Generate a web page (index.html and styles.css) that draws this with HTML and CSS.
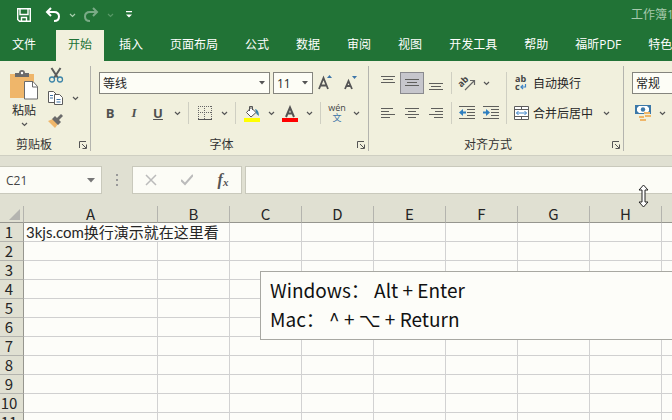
FILE: index.html
```html
<!DOCTYPE html>
<html lang="zh-CN">
<head>
    <meta charset="UTF-8">
    <meta name="viewport" content="width=device-width, initial-scale=1.0">
    <title>工作簿1</title>
    <link rel="stylesheet" href="styles.css">
</head>
<body>
    <header class="title-bar">
        <div class="quick-access">
            <button class="quick-btn" aria-label="保存">
                <svg width="14" height="14" viewBox="0 0 14 14" fill="none" stroke="#fff" stroke-width="1.400"><path d="M.700.700h12.600v12.600H2.500L.700 11.500z"/><path d="M3 1v5.500h8V1M4.500 13V9.500h5V13"/></svg>
            </button>
            <button class="quick-btn" aria-label="撤消">
                <svg width="16" height="16" viewBox="0 0 16 16" fill="none" stroke="#fff" stroke-width="2"><path d="M6 1L2 5l4 4M2.500 5H9q5 0 5 4.500T9 14"/></svg>
            </button>
            <button class="chev-btn" aria-label="撤消选项"><svg class="chev" width="7" height="5" viewBox="0 0 7 5"><path d="M1 1l2.500 2.500L6 1"/></svg></button>
            <button class="quick-btn faded" aria-label="恢复">
                <svg width="16" height="16" viewBox="0 0 16 16" fill="none" stroke="#fff" stroke-width="2"><path d="M10 1l4 4-4 4M13.500 5H7q-5 0-5 4.500T7 14"/></svg>
            </button>
            <button class="chev-btn faded" aria-label="恢复选项"><svg class="chev" width="7" height="5" viewBox="0 0 7 5"><path d="M1 1l2.500 2.500L6 1"/></svg></button>
            <button class="quick-btn customize" aria-label="自定义快速访问工具栏">
                <svg width="8" height="8" viewBox="0 0 8 8" fill="#fff"><path d="M1 0h6v1.300H1zM1 3.500h6L4 6.500z"/></svg>
            </button>
        </div>
        <span class="doc-name">工作簿1</span>
    </header>

    <nav class="tabs">
        <a href="#file" class="tab file">文件</a>
        <a href="#home" class="tab active">开始</a>
        <a href="#insert" class="tab">插入</a>
        <a href="#layout" class="tab">页面布局</a>
        <a href="#formulas" class="tab">公式</a>
        <a href="#data" class="tab">数据</a>
        <a href="#review" class="tab">审阅</a>
        <a href="#view" class="tab">视图</a>
        <a href="#developer" class="tab">开发工具</a>
        <a href="#help" class="tab">帮助</a>
        <a href="#pdf" class="tab">福昕PDF</a>
        <a href="#special" class="tab">特色</a>
    </nav>

    <div class="ribbon">
        <section class="group clipboard">
            <div class="clip-tools">
                <button class="paste">
                    <svg width="28" height="30" viewBox="0 0 28 30"><path d="M0 4h24v24H0z" fill="#efb66a"/><path d="M5 7V3h4q0-3 3-3t3 3h4v4z" fill="#6b6b6b"/><circle cx="12" cy="3" r="1.200" fill="#fff"/><path d="M14.500 11.500H23l4.500 5v12.500h-13z" fill="#fff" stroke="#6b6b6b"/><path d="M22.500 11.500v5.500h5" fill="none" stroke="#6b6b6b"/></svg>
                    <span>粘贴</span>
                    <svg class="chev" width="7" height="5" viewBox="0 0 7 5"><path d="M1 1l2.500 2.500L6 1"/></svg>
                </button>
                <div class="clip-side">
                    <button class="icon-btn" aria-label="剪切">
                        <svg width="16" height="16" viewBox="0 0 16 16" fill="none"><path d="M3.500 1L10 11M12.500 1L6 11" stroke="#5c5c5c" stroke-width="2"/><circle cx="4" cy="12.500" r="2.500" stroke="#3c84a8" stroke-width="1.300"/><circle cx="12" cy="12.500" r="2.500" stroke="#3c84a8" stroke-width="1.300"/></svg>
                    </button>
                    <div class="row-pair">
                        <button class="icon-btn" aria-label="复制">
                            <svg width="16" height="16" viewBox="0 0 16 16" fill="#fff" stroke="#5c5c5c"><path d="M.500 1.500h5l3 3v8h-8z"/><path d="M6.500 4.500h5l3 3v7h-8z"/><path d="M2 5.500h3M2 8h3M8.500 9.500h4M8.500 12h4" stroke="#3c74a8"/></svg>
                        </button>
                        <button class="chev-btn" aria-label="复制选项"><svg class="chev" width="7" height="5" viewBox="0 0 7 5"><path d="M1 1l2.500 2.500L6 1"/></svg></button>
                    </div>
                    <button class="icon-btn" aria-label="格式刷">
                        <svg width="16" height="16" viewBox="0 0 16 16"><path d="M0 8l5-2 5 5-3 4z" fill="#efb66a"/><path d="M4 6l3-3 2 2 4-4 2 2-4 4 2 2-3 3z" fill="#6b6b6b"/></svg>
                    </button>
                </div>
            </div>
            <footer class="group-name"><span>剪贴板</span>
                <button class="launcher" aria-label="剪贴板设置"><svg width="8" height="8" viewBox="0 0 8 8"><path d="M.500 7V.500H7M3 3l4 4M7.500 3.500v4h-4"/></svg></button>
            </footer>
        </section>

        <section class="group font">
            <div class="tool-row">
                <select class="font-name" aria-label="字体"><option>等线</option></select>
                <select class="font-size" aria-label="字号"><option>11</option></select>
                <button class="icon-btn" aria-label="增大字号">
                    <svg width="16" height="16" viewBox="0 0 16 16"><path d="M1 14L5.500 3 10 14M3 10.500h5" fill="none" stroke="#555" stroke-width="1.800"/><path d="M9 3l2.500-3L14 3z" fill="#3c74a8"/></svg>
                </button>
                <button class="icon-btn" aria-label="减小字号">
                    <svg width="16" height="16" viewBox="0 0 16 16"><path d="M3 14l3.500-8L10 14M4.500 11h4" fill="none" stroke="#555" stroke-width="1.800"/><path d="M10 1h5l-2.500 3z" fill="#3c74a8"/></svg>
                </button>
            </div>
            <div class="tool-row">
                <button class="icon-btn letter">B</button>
                <button class="icon-btn letter italic">I</button>
                <button class="icon-btn letter underline">U</button>
                <button class="chev-btn" aria-label="下划线选项"><svg class="chev" width="7" height="5" viewBox="0 0 7 5"><path d="M1 1l2.500 2.500L6 1"/></svg></button>
                <span class="divider"></span>
                <button class="icon-btn" aria-label="边框">
                    <svg width="14" height="14" viewBox="0 0 14 14" fill="none" stroke="#666"><path d="M0 .500h14M.500 0v14M13.500 0v14M6.500 0v14M0 6.500h14" stroke-dasharray="1 1"/><path d="M0 13.500h14" stroke="#555"/></svg>
                </button>
                <button class="chev-btn" aria-label="边框选项"><svg class="chev" width="7" height="5" viewBox="0 0 7 5"><path d="M1 1l2.500 2.500L6 1"/></svg></button>
                <span class="divider"></span>
                <button class="icon-btn" aria-label="填充颜色">
                    <svg width="16" height="17" viewBox="0 0 16 17"><path d="M7 2.500l5 5-5 4.500-4.500-4.500z" fill="#fff" stroke="#555"/><path d="M5.500 6V1.500h3V5" fill="none" stroke="#555"/><path d="M11 4q4 1 4 7l-2.500-2z" fill="#3c84a8"/><path d="M0 13h16v4H0z" fill="#ffff00"/></svg>
                </button>
                <button class="chev-btn" aria-label="填充颜色选项"><svg class="chev" width="7" height="5" viewBox="0 0 7 5"><path d="M1 1l2.500 2.500L6 1"/></svg></button>
                <button class="icon-btn" aria-label="字体颜色">
                    <svg width="16" height="17" viewBox="0 0 16 17"><path d="M4 12L8 2.500 12 12M5.500 8.500h5" fill="none" stroke="#555" stroke-width="2"/><path d="M0 13h16v4H0z" fill="#ff0000"/></svg>
                </button>
                <button class="chev-btn" aria-label="字体颜色选项"><svg class="chev" width="7" height="5" viewBox="0 0 7 5"><path d="M1 1l2.500 2.500L6 1"/></svg></button>
                <span class="divider"></span>
                <button class="icon-btn phonetic"><span>wén</span><span class="han">文</span></button>
                <button class="chev-btn" aria-label="拼音选项"><svg class="chev" width="7" height="5" viewBox="0 0 7 5"><path d="M1 1l2.500 2.500L6 1"/></svg></button>
            </div>
            <footer class="group-name"><span>字体</span>
                <button class="launcher" aria-label="字体设置"><svg width="8" height="8" viewBox="0 0 8 8"><path d="M.500 7V.500H7M3 3l4 4M7.500 3.500v4h-4"/></svg></button>
            </footer>
        </section>

        <section class="group align">
            <div class="align-tools">
                <div class="stack">
                    <div class="tool-row">
                        <button class="icon-btn" aria-label="顶端对齐"><svg class="lines" width="14" height="14" viewBox="0 0 14 14"><path d="M0 .500h14M2 3.500h10M0 6.500h14"/></svg></button>
                        <button class="icon-btn pressed" aria-label="垂直居中"><svg class="lines" width="14" height="14" viewBox="0 0 14 14"><path d="M0 3.500h14M2 6.500h10M0 9.500h14"/></svg></button>
                        <button class="icon-btn" aria-label="底端对齐"><svg class="lines" width="14" height="14" viewBox="0 0 14 14"><path d="M0 7.500h14M2 10.500h10M0 13.500h14"/></svg></button>
                        <span class="divider"></span>
                        <button class="icon-btn" aria-label="方向">
                            <svg width="18" height="18" viewBox="0 0 18 18"><text x="0" y="10" transform="rotate(-45 6 8)" class="ab">ab</text><path d="M7 16l9-9M16.500 11V6.500H12" fill="none" stroke="#666" stroke-width="1.200"/></svg>
                        </button>
                        <button class="chev-btn" aria-label="方向选项"><svg class="chev" width="7" height="5" viewBox="0 0 7 5"><path d="M1 1l2.500 2.500L6 1"/></svg></button>
                    </div>
                    <div class="tool-row">
                        <button class="icon-btn" aria-label="左对齐"><svg class="lines" width="14" height="12" viewBox="0 0 14 12"><path d="M0 1.500h12M0 4.500h8M0 7.500h14M0 10.500h9"/></svg></button>
                        <button class="icon-btn" aria-label="居中"><svg class="lines" width="14" height="12" viewBox="0 0 14 12"><path d="M0 1.500h14M3 4.500h8M0 7.500h14M3 10.500h8"/></svg></button>
                        <button class="icon-btn" aria-label="右对齐"><svg class="lines" width="14" height="12" viewBox="0 0 14 12"><path d="M2 1.500h12M6 4.500h8M0 7.500h14M5 10.500h9"/></svg></button>
                        <span class="divider"></span>
                        <button class="icon-btn" aria-label="减少缩进"><svg class="lines" width="16" height="14" viewBox="0 0 16 14"><path d="M0 .500h16M8 3.500h8M8 6.500h8M8 9.500h8M0 12.500h16"/><path class="arrow" d="M0 6.500l4-3.500v2.500h3v2H4V10z"/></svg></button>
                        <button class="icon-btn" aria-label="增加缩进"><svg class="lines" width="16" height="14" viewBox="0 0 16 14"><path d="M0 .500h16M8 3.500h8M8 6.500h8M8 9.500h8M0 12.500h16"/><path class="arrow" d="M7 6.500L3 3v2.500H0v2h3V10z"/></svg></button>
                    </div>
                </div>
                <span class="divider"></span>
                <div class="stack">
                    <button class="text-btn">
                        <svg width="16" height="20" viewBox="0 0 16 20"><text x="1" y="9" class="ab">ab</text><text x="1" y="17" class="ab">c</text><path d="M11.500 11v3H7M9 12l-2 2 2 2" fill="none" stroke="#3c84c8" stroke-width="1.200"/></svg>
                        自动换行
                    </button>
                    <button class="text-btn">
                        <svg width="16" height="16" viewBox="0 0 16 16" fill="#fff" stroke="#5c5c5c"><path d="M.500 1.500h14v13h-14zM.500 4.500h14M.500 11.500h14M7.500 1.500v3M7.500 11.500v3"/><path d="M2.500 8h10M4.500 6l-2 2 2 2M10.500 6l2 2-2 2" fill="none" stroke="#3c84c8"/></svg>
                        合并后居中
                        <svg class="chev" width="7" height="5" viewBox="0 0 7 5"><path d="M1 1l2.500 2.500L6 1"/></svg>
                    </button>
                </div>
            </div>
            <footer class="group-name"><span>对齐方式</span>
                <button class="launcher" aria-label="对齐设置"><svg width="8" height="8" viewBox="0 0 8 8"><path d="M.500 7V.500H7M3 3l4 4M7.500 3.500v4h-4"/></svg></button>
            </footer>
        </section>

        <section class="group number">
            <div class="tool-row">
                <select class="number-format" aria-label="数字格式"><option>常规</option></select>
            </div>
            <div class="tool-row">
                <button class="icon-btn" aria-label="会计数字格式">
                    <svg width="16" height="16" viewBox="0 0 16 16"><path d="M0 0h16v9H0z" fill="#3c78a8"/><path d="M2 3l2-2h8l2 2v3l-2 2H4L2 6z" fill="#fff"/><circle cx="8" cy="4.500" r="2.200" fill="#3c78a8"/><path d="M9 7h6v2H9zM10 10h6v2h-6zM4 11h5v2H4zM5 14h6v2H5z" fill="#efb66a"/></svg>
                </button>
                <button class="chev-btn" aria-label="货币选项"><svg class="chev" width="7" height="5" viewBox="0 0 7 5"><path d="M1 1l2.500 2.500L6 1"/></svg></button>
            </div>
        </section>
    </div>

    <div class="formula-bar">
        <div class="name-box">
            <input type="text" value="C21" aria-label="名称框">
            <svg width="8" height="5" viewBox="0 0 8 5"><path d="M0 0h8L4 4.500z" fill="#777"/></svg>
        </div>
        <svg class="grip" width="2" height="12" viewBox="0 0 2 12"><path d="M0 0h2v2H0zM0 5h2v2H0zM0 10h2v2H0z" fill="#999"/></svg>
        <div class="formula-buttons">
            <button aria-label="取消"><svg width="12" height="12" viewBox="0 0 12 12" fill="none" stroke="#bbb" stroke-width="1.500"><path d="M1 1l10 10M11 1L1 11"/></svg></button>
            <button aria-label="输入"><svg width="12" height="12" viewBox="0 0 12 12" fill="none" stroke="#bbb" stroke-width="2"><path d="M0 6l4 4 8-9"/></svg></button>
            <button class="fx"><i>f</i><small>x</small></button>
        </div>
        <input type="text" class="formula-input" aria-label="编辑栏">
        <svg class="pointer" width="11" height="24" viewBox="0 0 11 24" fill="#fff" stroke="#222"><path d="M5.500 1l4.500 5H7v12h3l-4.500 5L1 18h3V6H1z"/></svg>
    </div>

    <main class="sheet">
        <table class="grid">
            <colgroup><col class="col-head"><col class="col-wide"><col span="8" class="col"></colgroup>
            <thead>
                <tr><th class="corner"><svg width="11" height="11" viewBox="0 0 11 11"><path d="M11 0v11H0z" fill="#b4b4b0"/></svg></th><th>A</th><th>B</th><th>C</th><th>D</th><th>E</th><th>F</th><th>G</th><th>H</th><th></th></tr>
            </thead>
            <tbody>
                <tr><th>1</th><td class="spill" colspan="2">3kjs.com换行演示就在这里看</td><td></td><td></td><td></td><td></td><td></td><td></td><td></td></tr>
                <tr><th>2</th><td></td><td></td><td></td><td></td><td></td><td></td><td></td><td></td><td></td></tr>
                <tr><th>3</th><td></td><td></td><td></td><td></td><td></td><td></td><td></td><td></td><td></td></tr>
                <tr><th>4</th><td></td><td></td><td></td><td></td><td></td><td></td><td></td><td></td><td></td></tr>
                <tr><th>5</th><td></td><td></td><td></td><td></td><td></td><td></td><td></td><td></td><td></td></tr>
                <tr><th>6</th><td></td><td></td><td></td><td></td><td></td><td></td><td></td><td></td><td></td></tr>
                <tr><th>7</th><td></td><td></td><td></td><td></td><td></td><td></td><td></td><td></td><td></td></tr>
                <tr><th>8</th><td></td><td></td><td></td><td></td><td></td><td></td><td></td><td></td><td></td></tr>
                <tr><th>9</th><td></td><td></td><td></td><td></td><td></td><td></td><td></td><td></td><td></td></tr>
                <tr><th>10</th><td></td><td></td><td></td><td></td><td></td><td></td><td></td><td></td><td></td></tr>
                <tr><th>11</th><td></td><td></td><td></td><td></td><td></td><td></td><td></td><td></td><td></td></tr>
            </tbody>
        </table>
        <div class="note">
            <p>Windows：&nbsp;Alt + Enter</p>
            <p>Mac：&nbsp;<span class="key">^</span> + <span class="key">⌥</span> + Return</p>
        </div>
    </main>
</body>
</html>
```

FILE: styles.css
```css
* {
    box-sizing: border-box;
}
body {
    margin: 0;
    height: 100vh;
    display: flex;
    flex-direction: column;
    overflow: hidden;
    background: #e0e0d2;
    color: #262626;
    font-family: "Open Sans", "Noto Sans CJK SC", sans-serif;
    font-size: 12px;
}
button, input, select {
    font: inherit;
    color: inherit;
    border: 0;
    padding: 0;
    margin: 0;
    background: none;
}
button {
    display: flex;
    align-items: center;
    justify-content: center;
}
svg {
    display: block;
    flex: none;
}
.chev {
    fill: none;
    stroke: #555;
    stroke-width: 1.2;
}

/* Title bar and tabs */
.title-bar {
    display: flex;
    align-items: center;
    height: 30px;
    padding-left: 12px;
    background: #217336;
    flex: none;
    overflow: hidden;
    white-space: nowrap;
}
.quick-access {
    display: flex;
    align-items: center;
    width: 619px;
    flex: none;
}
.quick-btn {
    width: 24px;
    height: 24px;
}
.quick-btn + .quick-btn {
    margin-left: 5px;
}
.quick-access .chev {
    stroke: #a8cfae;
}
.faded {
    opacity: 0.4;
}
.doc-name {
    color: #a6c9ac;
    line-height: 24px;
}
.tabs {
    display: flex;
    gap: 3px;
    height: 31px;
    background: #217336;
    flex: none;
    overflow: hidden;
    white-space: nowrap;
}
.tab {
    padding: 0 12px;
    color: #fff;
    line-height: 30px;
    text-decoration: none;
    flex: none;
}
.tab.file {
    padding-right: 17px;
}
.tab.active {
    background: #f1f0dd;
    color: #217336;
}

/* Ribbon */
.ribbon {
    display: flex;
    height: 95px;
    padding: 5px 0 4px;
    background: #f1f0dd;
    border-bottom: 1px solid #cfcfc2;
    flex: none;
    overflow: hidden;
}
.group {
    display: flex;
    flex-direction: column;
    gap: 8px;
    flex: none;
    padding: 6px 3px 0 7px;
    border-right: 1px solid #b4b4ae;
}
.clipboard {
    width: 91px;
    gap: 0;
    padding: 0 3px 0 8px;
}
.font {
    width: 278px;
}
.align {
    width: 255px;
}
.number {
    flex: 1;
    min-width: 0;
    border-right: 0;
}
.tool-row, .row-pair, .clip-tools, .align-tools {
    display: flex;
    align-items: center;
}
.tool-row {
    height: 22px;
}
.clip-tools {
    height: 64px;
    gap: 4px;
}
.stack {
    display: flex;
    flex-direction: column;
    gap: 8px;
}
.paste {
    flex-direction: column;
    gap: 3px;
    width: 32px;
    line-height: 16px;
}
.clip-side {
    display: flex;
    flex-direction: column;
    gap: 1px;
}
.icon-btn {
    width: 24px;
    height: 22px;
    flex: none;
}
.chev-btn {
    width: 14px;
    height: 22px;
    flex: none;
}
.pressed {
    background: #c6c6cc;
    border: 1px solid #8a8a8e;
}
.divider {
    align-self: stretch;
    width: 1px;
    margin: 0 4px;
    background: #cfcfc2;
}
.align .divider {
    margin: 0 3px;
}
.letter {
    color: #505050;
    font-size: 13px;
    font-weight: bold;
}
.italic {
    font-family: "Liberation Serif", serif;
    font-style: italic;
}
.underline {
    text-decoration: underline;
}
.phonetic {
    flex-direction: column;
    color: #444;
    font-size: 9px;
    line-height: 10px;
}
.han {
    color: #3c74a8;
}
select {
    appearance: none;
    flex: none;
    height: 22px;
    padding-left: 3px;
    border: 1px solid #85857e;
    background: #fdfdf6 url("data:image/svg+xml,%3Csvg xmlns='http://www.w3.org/2000/svg' width='6' height='4'%3E%3Cpath d='M0 0h6L3 3.500z' fill='%23555'/%3E%3C/svg%3E") no-repeat right 4px center;
}
.font-name {
    width: 171px;
    margin: 0 3px 0 1px;
}
.font-size {
    width: 40px;
}
.number-format {
    width: 96px;
    margin-left: 1px;
}
.font .tool-row select + .icon-btn {
    margin-left: 1px;
}
.text-btn {
    justify-content: flex-start;
    gap: 3px;
    height: 22px;
    padding-left: 4px;
    white-space: nowrap;
}
.text-btn .chev {
    margin-left: 7px;
}
.ab {
    font-size: 9px;
    font-weight: bold;
    fill: #444;
    stroke: none;
}
.lines {
    fill: none;
    stroke: #5f5f5c;
}
.lines .arrow {
    fill: #2f7fc0;
    stroke: none;
}
.group-name {
    display: flex;
    align-items: center;
    height: 13px;
    margin-top: auto;
    line-height: 13px;
    color: #333;
}
.group-name span {
    flex: 1;
    padding-right: 12px;
    text-align: center;
}
.clipboard .group-name span {
    padding-right: 19px;
}
.launcher svg {
    fill: none;
    stroke: #555;
}

/* Formula bar */
.formula-bar {
    position: relative;
    display: flex;
    align-items: center;
    height: 50px;
    padding: 10px 0 12px;
    flex: none;
}
.name-box, .formula-buttons, .formula-input {
    height: 28px;
    background: #fcfcf6;
    border: 1px solid #c9c9bc;
}
.name-box {
    display: flex;
    align-items: center;
    width: 102px;
    padding: 0 6px;
    border-left: 0;
}
.name-box input {
    flex: 1;
    min-width: 0;
    color: #444;
}
.grip {
    margin: 0 14px;
}
.formula-buttons {
    display: flex;
    justify-content: space-around;
    width: 110px;
}
.formula-buttons button {
    width: 36px;
}
.fx {
    font-family: "Liberation Serif", serif;
    font-size: 16px;
    font-weight: bold;
    color: #555;
}
.fx small {
    font-size: 11px;
    font-style: italic;
    padding-top: 4px;
}
.formula-input {
    flex: 1;
    min-width: 0;
    margin-left: 3px;
    padding: 0 6px;
    border-right: 0;
}
.pointer {
    position: absolute;
    right: 23px;
    top: 28px;
    z-index: 1;
}

/* Worksheet */
.sheet {
    position: relative;
    flex: 1;
    overflow: hidden;
    background: #fdfdf9;
    font-family: "Noto Sans CJK SC", sans-serif;
    font-size: 15px;
}
.grid {
    width: 734px;
    table-layout: fixed;
    border-collapse: separate;
    border-spacing: 0;
}
.col-head {
    width: 24px;
}
.col-wide {
    width: 134px;
}
.col {
    width: 72px;
}
.grid th, .grid td {
    height: 19px;
    padding: 0;
    line-height: 18px;
    border-right: 1px solid #d2d2d2;
    border-bottom: 1px solid #d0d0d0;
}
.grid th {
    background: #e0e0d2;
    border-right-color: #96968f;
    border-bottom-color: #b4b4ae;
    font-weight: normal;
}
.grid tbody th {
    padding-right: 5px;
}
.grid thead th {
    height: 17px;
    line-height: 16px;
    border-right-color: #b4b4ae;
    border-bottom-color: #96968f;
}
.corner svg {
    margin-left: auto;
    margin-right: 3px;
}
.grid .spill {
    padding-left: 2px;
    font-family: Lato, "Noto Sans CJK SC", sans-serif;
    white-space: nowrap;
}
.note {
    position: absolute;
    left: 260px;
    right: 0;
    top: 65px;
    padding: 3px 9px 6px;
    background: #fdfdf9;
    border: 1px solid #a8a8a2;
    border-right: 0;
    color: #111;
    font-size: 19px;
    line-height: 29px;
}
.note p {
    margin: 0;
}
.key {
    font-family: "Noto Sans CJK SC", "DejaVu Sans", sans-serif;
}
```
